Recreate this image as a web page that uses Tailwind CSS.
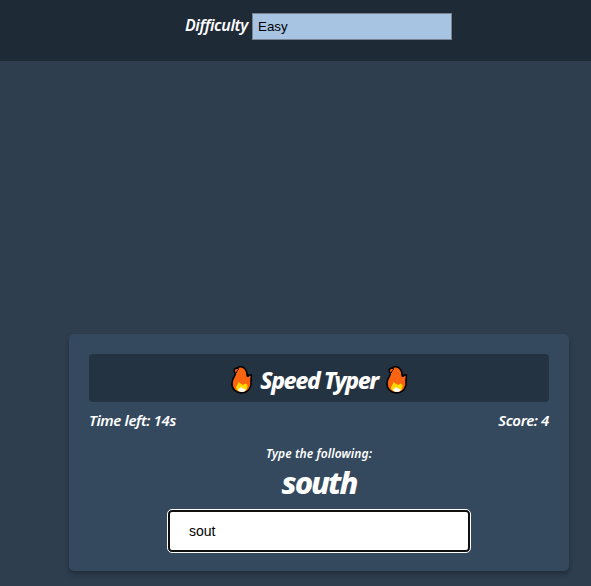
<!DOCTYPE html>
<html lang="en">
<head>
<meta charset="utf-8">
<title>Speed Typer</title>
<script src="https://cdn.jsdelivr.net/npm/@tailwindcss/browser@4"></script>
</head>
<body class="h-[586px] w-[591px] overflow-hidden bg-[#2e3e4f] font-['Noto_Sans','Open_Sans',sans-serif] text-white italic">
<svg class="hidden">
  <symbol id="flame" viewBox="0 0 24 30">
    <path d="M4.200 5C4.400 3.400 6 2.900 7.500 3.300C8.500 1.600 11.500 1.200 13.500 2.600C16.300 4.500 17.200 7.500 17.200 11L18.200 11.300 19 10H21.300C21.600 12.500 20.800 14 21 16.500C22 21.500 18.500 27.500 12.500 27.800C6 28.300 1.800 24 2 18.500C2.200 15.500 2.800 13.500 4.300 11.500C5 10.500 5.300 9.500 5.300 8.200C4.400 7.300 4 6.200 4.200 5Z" fill="#fa6410" stroke="#000" stroke-width="1.600" stroke-linejoin="round"/>
    <path d="M8.500 3.500C8.600 5.200 6.700 5.500 6.200 8" fill="none" stroke="#000" stroke-width="1"/>
    <path d="M6 22.500 8.700 17 10.500 18.500 12.800 20 15.500 18.500 17.500 20C17.600 23.500 16.500 26.600 12 26.700C8 26.600 6.300 25 6 22.500Z" fill="#ffd800"/>
    <path d="M8 24.500 11.300 22 12.500 23.400 15.800 24C15.500 26 14 26.900 12 26.900C9.700 26.900 8.300 26 8 24.500Z" fill="#fff"/>
  </symbol>
</svg>
<header class="flex h-[61px] items-start bg-[#1f2a37] pt-[13px] pl-[185px]">
  <label class="w-[67px] text-[16px] leading-[25px] font-semibold tracking-[-0.4px] whitespace-nowrap">Difficulty</label>
  <div class="flex h-[27px] w-[200px] items-center border border-[#77838f] bg-[#a7c4e2] pl-[5px] font-['Liberation_Sans',sans-serif] text-[13.333px] text-black not-italic">Easy</div>
</header>
<main class="mt-[273px] ml-[69px] flex h-[237px] w-[500px] flex-col rounded-[5px] bg-[#34495e] p-5 shadow-[0_3px_5px_rgba(0,0,0,0.3)]">
  <h1 class="flex h-12 shrink-0 items-center justify-center gap-[5px] rounded-[4px] bg-[#243341] pt-1">
    <svg class="h-[30px] w-6"><use href="#flame"/></svg>
    <span class="flex w-[121px] justify-center text-[23px] leading-[30px] font-extrabold tracking-[-1.4px] whitespace-nowrap">Speed Typer</span>
    <svg class="h-[30px] w-6"><use href="#flame"/></svg>
  </h1>
  <div class="flex h-[36px] shrink-0 items-center justify-between text-[15px] font-semibold tracking-[-0.37px]">
    <span>Time left: 14s</span><span>Score: 4</span>
  </div>
  <p class="mt-[6px] h-[19px] shrink-0 text-center text-[12px] leading-[19px] font-semibold tracking-[0.08px]">Type the following:</p>
  <h2 class="h-[41px] shrink-0 text-center text-[31px] leading-[38px] font-extrabold tracking-[-2px]">south</h2>
  <div class="mx-auto mt-[6px] flex h-[42px] w-[302px] shrink-0 items-center rounded-[4px] border-2 border-[#101010] bg-white pl-[19px] font-['Liberation_Sans',sans-serif] text-[14px] text-black not-italic outline outline-white">sout</div>
</main>
</body>
</html>
